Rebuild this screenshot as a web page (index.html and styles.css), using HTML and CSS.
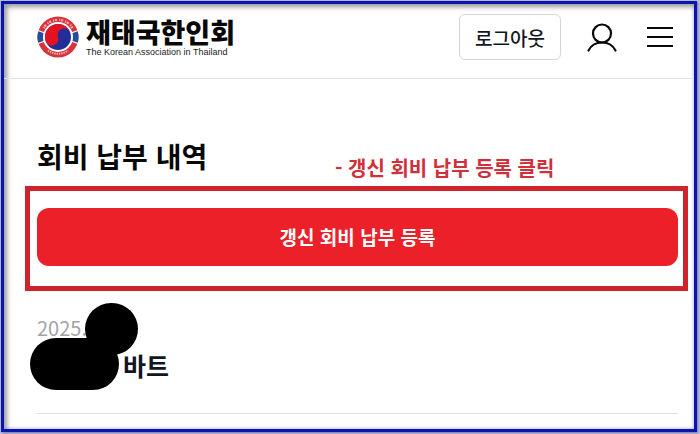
FILE: index.html
```html
<!DOCTYPE html>
<html lang="ko">
<head>
<meta charset="utf-8">
<meta name="viewport" content="width=device-width, initial-scale=1">
<title>회비 납부 내역</title>
<link rel="stylesheet" href="styles.css">
</head>
<body>
<div class="frame">
  <header class="header">
    <a class="brand" href="#">
      <svg class="emblem" viewBox="0 0 42 42" aria-hidden="true">
        <circle cx="21" cy="21" r="20.5" fill="#d8333b"/>
        <path d="M1.2 15.500A20.500 20.500 0 0 0 1.200 26.500L8 24.500V17.500ZM40.800 15.500A20.500 20.500 0 0 1 40.800 26.500L34 24.500V17.500Z" fill="#20509c"/>
        <path d="M1 14.500L8 17M41 14.500L34 17M1 27.500L8 25M41 27.500L34 25" stroke="#fff" stroke-width="1.200"/>
        <path d="M6.500 12A17 17 0 0 1 35.500 12" fill="none" stroke="#f0a9ad" stroke-width="2.400" stroke-dasharray="1.200 .8 2.200 1.900"/>
        <path d="M11 34.500A17 17 0 0 0 31 34.500" fill="none" stroke="#f2b4b7" stroke-width="1.800" stroke-dasharray="1.500 .8"/>
        <circle cx="21" cy="21" r="15" fill="#fff"/>
        <circle cx="21" cy="21" r="13" fill="#232d9a"/>
        <path transform="rotate(14 21 21)" d="M10.100 28.100A13 13 0 0 1 31.900 13.900A6.500 6.500 0 0 0 21 21A6.500 6.500 0 0 1 10.100 28.100Z" fill="#e2131f"/>
      </svg>
      <span class="brand-text">
        <span class="brand-name">재태국한인회</span>
        <span class="brand-sub">The Korean Association in Thailand</span>
      </span>
    </a>
    <nav class="actions">
      <button class="logout" type="button">로그아웃</button>
      <button class="icon-button" type="button" aria-label="내 정보">
        <svg width="30" height="30" viewBox="0 0 30 30" fill="none" stroke="#080808" stroke-width="2.200" stroke-linecap="round" aria-hidden="true">
          <circle cx="15" cy="11.500" r="9"/>
          <path d="M1.500 28.500C4 23.500 9 20.500 15 20.500S26 23.500 28.500 28.500"/>
        </svg>
      </button>
      <button class="icon-button" type="button" aria-label="메뉴">
        <svg width="26" height="30" viewBox="0 0 26 30" stroke="#080808" stroke-width="2" aria-hidden="true">
          <path d="M0 6H26M0 15H26M0 24H26"/>
        </svg>
      </button>
    </nav>
  </header>
  <main class="content">
    <h1 class="title">회비 납부 내역</h1>
    <div class="register">
      <button class="primary" type="button">갱신 회비 납부 등록</button>
      <div class="highlight"></div>
      <p class="callout">- 갱신 회비 납부 등록 클릭</p>
    </div>
    <section class="payment">
      <div class="date">2025.</div>
      <div class="amount">바트</div>
      <span class="mask mask-date"></span>
      <span class="mask mask-amount"></span>
    </section>
  </main>
</div>
</body>
</html>
```
FILE: styles.css
```css
* {
  box-sizing: border-box;
}

body {
  margin: 0;
  padding: 1px 3px 2px 1px;
  background: #b9bddf;
  color: #080808;
  font-family: "Noto Sans CJK KR", sans-serif;
}

button {
  font: inherit;
  color: inherit;
  cursor: pointer;
}

.frame {
  min-height: calc(100vh - 3px);
  border: 3px solid #0c14ae;
  background: #fff;
  box-shadow: inset 3px 3px 5px #999, inset -1px -1px 3px #c8ccf5, 1px 1px 2px #7777a8;
}

.header {
  display: flex;
  align-items: center;
  justify-content: space-between;
  height: 75px;
  padding: 0 21px 8px 33px;
  border-bottom: 1px solid #e2e2e4;
}

.brand {
  display: flex;
  align-items: center;
  gap: 7px;
  color: inherit;
  text-decoration: none;
}

.emblem {
  width: 42px;
  height: 42px;
}

.brand-text {
  display: flex;
  flex-direction: column;
}

.brand-name {
  font-size: 27px;
  font-weight: 900;
  line-height: 30px;
}

.brand-sub {
  color: #222;
  font-family: "Liberation Sans", sans-serif;
  font-size: 9px;
  line-height: 10px;
}

.actions {
  display: flex;
  align-items: center;
  gap: 26px;
}

.logout {
  height: 46px;
  padding: 0 15px;
  border: 1px solid #d4d5da;
  border-radius: 6px;
  background: #fff;
  color: #111722;
  font-size: 19px;
  font-weight: 500;
}

.icon-button {
  display: flex;
  padding: 0;
  border: 0;
  background: none;
}

.icon-button + .icon-button {
  margin-left: 4px;
}

.content {
  padding: 57px 16px 0 33px;
}

.title {
  margin: 0 0 32px;
  font-size: 28px;
  font-weight: 700;
  line-height: 40px;
}

.register {
  position: relative;
}

.primary {
  display: block;
  width: 100%;
  height: 58px;
  padding: 0 0 2px;
  border: 0;
  border-radius: 12px;
  background: #eb2029;
  color: #fff;
  font-size: 19px;
  font-weight: 700;
}

.highlight {
  position: absolute;
  inset: -22px -10px -25px -12px;
  border: 5px solid #cf242c;
  pointer-events: none;
}

.callout {
  position: absolute;
  left: 298px;
  bottom: 84px;
  margin: 0;
  color: #d0303a;
  font-size: 20px;
  font-weight: 700;
  line-height: 28px;
  white-space: nowrap;
}

.payment {
  position: relative;
  margin-top: 48px;
  padding-bottom: 30px;
  border-bottom: 1px solid #dedede;
}

.date {
  color: #a3a3a5;
  font-size: 20px;
  line-height: 28px;
}

.amount {
  margin-top: 5px;
  padding-left: 86px;
  color: #111722;
  font-size: 25px;
  font-weight: 700;
  line-height: 36px;
}

.mask {
  position: absolute;
  height: 52px;
  border-radius: 26px;
  background: #000;
}

.mask-date {
  top: -11px;
  left: 48px;
  width: 53px;
}

.mask-amount {
  top: 24px;
  left: -7px;
  width: 89px;
}
```
